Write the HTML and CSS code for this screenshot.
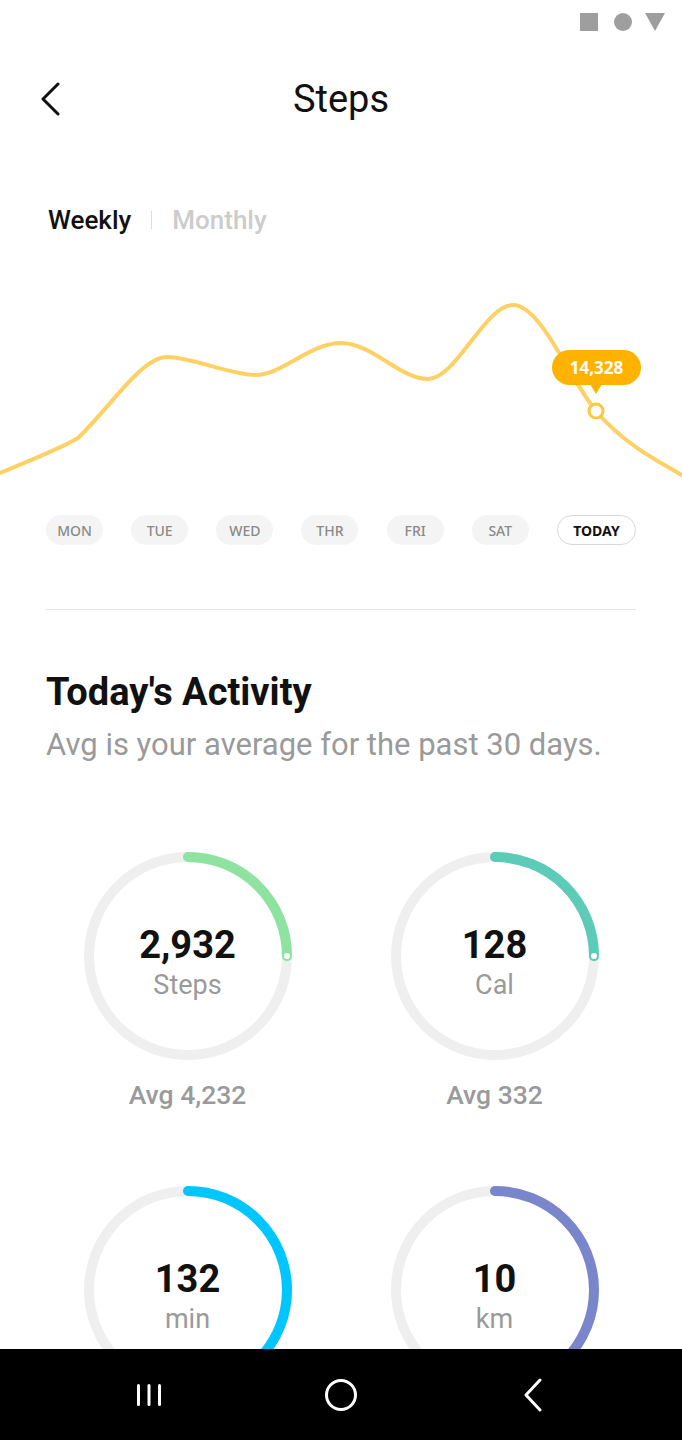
FILE: index.html
```html
<!DOCTYPE html>
<html lang="en">
<head>
    <meta charset="UTF-8" />
    <meta name="viewport" content="width=device-width, initial-scale=1" />
    <title>Steps</title>
    <link rel="stylesheet" href="styles.css">
</head>
<body>
    <div class="screen">
        <div class="content">
            <div class="status">
                <span class="st-square"></span>
                <span class="st-circle"></span>
                <svg class="st-tri" width="20" height="18" viewBox="0 0 20 18"><polygon points="0,0 20,0 10,18" fill="#9e9e9e"/></svg>
            </div>

            <header class="topbar">
                <button class="back">
                    <svg width="22" height="34" viewBox="0 0 22 34"><polyline points="18,2 3,17 18,32" fill="none" stroke="#111" stroke-width="3" stroke-linecap="round" stroke-linejoin="round"/></svg>
                </button>
                <h1>Steps</h1>
            </header>

            <div class="tabs">
                <span class="tab active">Weekly</span>
                <span class="sep"></span>
                <span class="tab">Monthly</span>
            </div>

            <div class="chart">
                <svg width="682" height="210" viewBox="0 0 682 210">
                    <path d="M0,193 C30,180 58,170 78,158 C112,125 142,77 167,77 S230,95 256,95 S310,63 341,63 S400,99 428,99 S485,25 513,25 C541,25 570,100 596,131 C622,162 655,180 682,195"
                          fill="none" stroke="#ffd063" stroke-width="4" stroke-linecap="round"/>
                    <circle cx="596" cy="131" r="7" fill="#fff" stroke="#ffc640" stroke-width="3"/>
                </svg>
                <div class="tip">14,328</div>
            </div>

            <div class="days">
                <span class="day">MON</span>
                <span class="day">TUE</span>
                <span class="day">WED</span>
                <span class="day">THR</span>
                <span class="day">FRI</span>
                <span class="day">SAT</span>
                <span class="day today">TODAY</span>
            </div>

            <hr class="rule">

            <section class="activity">
                <h2>Today's Activity</h2>
                <p class="sub">Avg is your average for the past 30 days.</p>

                <div class="rings">
                    <div class="ring-item">
                        <div class="ring">
                            <svg width="208" height="208" viewBox="0 0 208 208">
                                <circle cx="104" cy="104" r="99" fill="none" stroke="#efefef" stroke-width="10"/>
                                <circle cx="104" cy="104" r="99" fill="none" stroke="#8fe3a1" stroke-width="10" stroke-linecap="round" stroke-dasharray="155.5 622" transform="rotate(-90 104 104)"/>
                                <circle cx="203" cy="104" r="3" fill="#fff"/>
                            </svg>
                            <div class="ring-label">
                                <span class="num">2,932</span>
                                <span class="unit">Steps</span>
                            </div>
                        </div>
                        <div class="avg">Avg 4,232</div>
                    </div>

                    <div class="ring-item">
                        <div class="ring">
                            <svg width="208" height="208" viewBox="0 0 208 208">
                                <circle cx="104" cy="104" r="99" fill="none" stroke="#efefef" stroke-width="10"/>
                                <circle cx="104" cy="104" r="99" fill="none" stroke="#5ccbb7" stroke-width="10" stroke-linecap="round" stroke-dasharray="155.5 622" transform="rotate(-90 104 104)"/>
                                <circle cx="203" cy="104" r="3" fill="#fff"/>
                            </svg>
                            <div class="ring-label">
                                <span class="num">128</span>
                                <span class="unit">Cal</span>
                            </div>
                        </div>
                        <div class="avg">Avg 332</div>
                    </div>

                    <div class="ring-item">
                        <div class="ring">
                            <svg width="208" height="208" viewBox="0 0 208 208">
                                <circle cx="104" cy="104" r="99" fill="none" stroke="#efefef" stroke-width="10"/>
                                <circle cx="104" cy="104" r="99" fill="none" stroke="#00c6ff" stroke-width="10" stroke-linecap="round" stroke-dasharray="345 622" transform="rotate(-90 104 104)"/>
                            </svg>
                            <div class="ring-label">
                                <span class="num">132</span>
                                <span class="unit">min</span>
                            </div>
                        </div>
                    </div>

                    <div class="ring-item">
                        <div class="ring">
                            <svg width="208" height="208" viewBox="0 0 208 208">
                                <circle cx="104" cy="104" r="99" fill="none" stroke="#efefef" stroke-width="10"/>
                                <circle cx="104" cy="104" r="99" fill="none" stroke="#7a86cb" stroke-width="10" stroke-linecap="round" stroke-dasharray="345 622" transform="rotate(-90 104 104)"/>
                            </svg>
                            <div class="ring-label">
                                <span class="num">10</span>
                                <span class="unit">km</span>
                            </div>
                        </div>
                    </div>
                </div>
            </section>
        </div>

        <nav class="navbar">
            <span class="nav-btn">
                <svg width="26" height="24" viewBox="0 0 26 24"><g fill="#fff"><rect x="1" y="1" width="3" height="22" rx="1.5"/><rect x="11.5" y="1" width="3" height="22" rx="1.5"/><rect x="22" y="1" width="3" height="22" rx="1.5"/></g></svg>
            </span>
            <span class="nav-btn">
                <svg width="34" height="34" viewBox="0 0 34 34"><circle cx="17" cy="17" r="14.5" fill="none" stroke="#fff" stroke-width="3"/></svg>
            </span>
            <span class="nav-btn">
                <svg width="20" height="34" viewBox="0 0 20 34"><polyline points="17,2 3,17 17,32" fill="none" stroke="#fff" stroke-width="3" stroke-linecap="round" stroke-linejoin="round"/></svg>
            </span>
        </nav>
    </div>
</body>
</html>
```

FILE: styles.css
```css
* { box-sizing: border-box; }
body { margin: 0; background: #fff; font-family: Roboto, "Liberation Sans", sans-serif; color: #111; }
.screen { width: 682px; height: 1440px; display: flex; flex-direction: column; overflow: hidden; }
.content { flex: 1; overflow: hidden; }

.status { height: 44px; display: flex; align-items: center; justify-content: flex-end; padding-right: 17px; }
.st-square { width: 18px; height: 18px; background: #9e9e9e; margin-right: 16px; }
.st-circle { width: 18px; height: 18px; border-radius: 50%; background: #9e9e9e; margin-right: 13px; }
.st-tri { display: block; }

.topbar { height: 110px; display: flex; align-items: center; justify-content: center; position: relative; }
.topbar h1 { margin: 0; font-size: 38px; font-weight: 400; color: #111; }
.back { position: absolute; left: 40px; top: 38px; background: none; border: none; padding: 0; }
.back svg { display: block; }

.tabs { margin-top: 51px; height: 30px; display: flex; align-items: center; padding-left: 48px; }
.tab { font-size: 26px; font-weight: 500; color: #ccc; line-height: 30px; }
.tab.active { color: #111; }
.sep { width: 1px; height: 18px; background: #ddd; margin: 0 20px; }

.chart { margin-top: 45px; height: 210px; position: relative; }
.chart svg { display: block; }
.tip { position: absolute; left: 552px; top: 70px; width: 89px; height: 35px; border-radius: 18px; background: #ffb300; color: #fff; font-family: "Noto Sans", Roboto, sans-serif; font-weight: 700; font-size: 17px; display: flex; align-items: center; justify-content: center; }
.tip::after { content: ""; position: absolute; left: 38px; bottom: -9px; border-left: 6px solid transparent; border-right: 6px solid transparent; border-top: 10px solid #ffb300; }

.days { margin-top: 25px; padding: 0 46px; display: flex; justify-content: space-between; }
.day { width: 57px; height: 30px; border-radius: 15px; background: #f4f4f4; color: #8a8a8a; font-family: "Noto Sans", Roboto, sans-serif; font-size: 14px; font-weight: 500; display: flex; align-items: center; justify-content: center; }
.day.today { width: 79px; background: #fff; border: 1.5px solid #d8d8d8; color: #111; font-weight: 700; }

.rule { margin: 64px 46px 0; border: none; border-top: 1px solid #e6e6e6; }

.activity { padding: 0 46px; }
.activity h2 { margin: 60px 0 0; font-size: 38px; font-weight: 700; line-height: 44px; color: #111; }
.sub { margin: 13px 0 0; font-size: 31px; line-height: 36px; color: #9a9a9a; }

.rings { margin: 89px -46px 0; display: grid; grid-template-columns: 208px 208px; justify-content: center; column-gap: 99px; row-gap: 76px; }
.ring-item { display: flex; flex-direction: column; align-items: center; }
.ring { display: grid; width: 208px; height: 208px; }
.ring svg, .ring-label { grid-area: 1 / 1; }
.ring svg { display: block; }
.ring-label { display: flex; flex-direction: column; align-items: center; justify-content: center; padding-top: 12px; }
.num { font-size: 38px; font-weight: 700; line-height: 42px; color: #111; }
.unit { font-size: 27px; line-height: 30px; color: #9a9a9a; margin-top: 4px; }
.avg { margin-top: 20px; font-size: 26.5px; font-weight: 500; line-height: 30px; color: #9a9a9a; }

.navbar { height: 91px; background: #000; display: grid; grid-template-columns: repeat(3, 192px); justify-content: center; align-items: center; }
.nav-btn { display: flex; justify-content: center; align-items: center; }
.nav-btn svg { display: block; }
```
